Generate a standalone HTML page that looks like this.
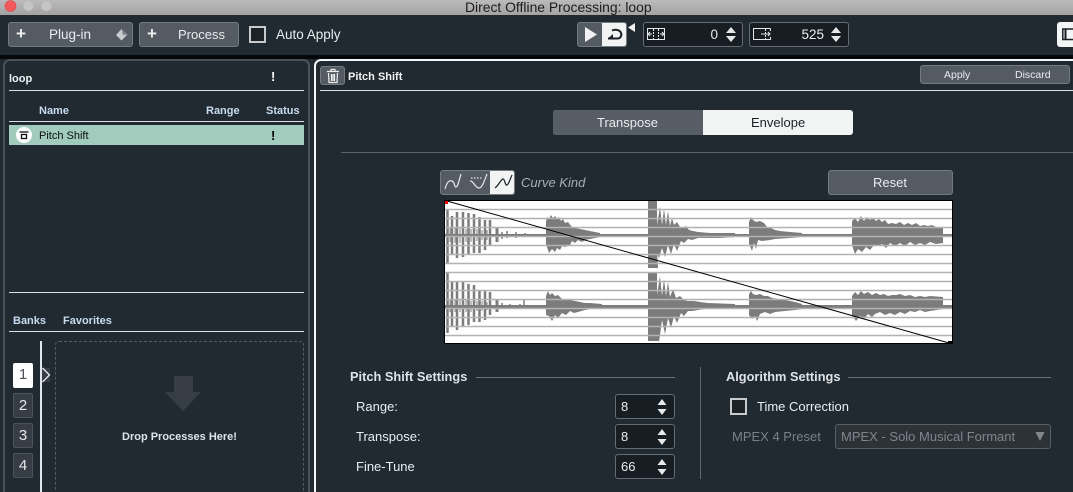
<!DOCTYPE html>
<html><head><meta charset="utf-8"><style>
html,body{margin:0;padding:0;background:#212a31}
#r{position:relative;width:1073px;height:492px;overflow:hidden;background:#212a31;font-family:"Liberation Sans",sans-serif;color:#e8edf0}
#r div,#r svg{position:absolute;box-sizing:border-box}
.t{white-space:nowrap;line-height:16px;height:16px}
.b{background:#545b62;border:1px solid #737a80;border-radius:3px}
.l{height:1px;background:#d8e0e6}
.h{font-weight:bold;font-size:11px;color:#c9dcef}
.f{background:#161d23;border:1px solid #666c72;border-radius:3px}
.c{background:#1b2228;border:2px solid #c8cbcd}
.sn{font-size:15px;color:#e8e8e8;text-align:center;border-radius:2px;line-height:24px}
</style></head><body><div id="r">
<div style="left:0;top:0;width:1073px;height:15px;background:linear-gradient(#bcbabc,#a3a3a3)"></div>
<svg style="left:0;top:0" width="60" height="15"><circle cx="10.500" cy="6" r="5.500" fill="#f25a5c" stroke="#d8474a" stroke-width=".6"/><circle cx="28.500" cy="6" r="5" fill="#c6c5c6"/><circle cx="46.500" cy="6" r="5" fill="#c6c5c6"/></svg>
<div class="t" style="left:465px;top:-1px;font-size:13.900px;color:#1c1c1c">Direct Offline Processing: loop</div>
<div style="left:0;top:55px;width:1073px;height:4px;background:#05080a"></div>

<div class="b" style="left:8px;top:22px;width:125px;height:25px"></div>
<div class="t" style="left:16px;top:26px;font-size:17px;font-weight:bold;color:#f0f0f0">+</div>
<div class="t" style="left:49px;top:27px;font-size:13.500px">Plug-in</div>
<svg style="left:115px;top:28px" width="14" height="14"><path d="M6.500 1L12.500 6.500 6.500 12.500 1 7Z" fill="#c9cccf"/><path d="M6.500 1L12.500 6.500 8 7Z" fill="#7b8186"/></svg>
<div class="b" style="left:139px;top:22px;width:100px;height:25px"></div>
<div class="t" style="left:147px;top:26px;font-size:17px;font-weight:bold;color:#f0f0f0">+</div>
<div class="t" style="left:178px;top:27px;font-size:13px">Process</div>
<div class="c" style="left:249px;top:26px;width:17px;height:17px"></div>
<div class="t" style="left:276px;top:27px;font-size:13.500px">Auto Apply</div>

<div class="b" style="left:577px;top:22px;width:50px;height:25px;overflow:hidden"><div style="left:24px;top:-1px;width:26px;height:25px;background:#f2f4f4"></div></div>
<svg style="left:577px;top:22px" width="60" height="26"><path d="M8 5L20 12.500 8 20Z" fill="#f2f2f2"/><path d="M31 16.500H41C44 16 45 13 44 11 43 8 39 7 35 8.500" fill="none" stroke="#1a1f24" stroke-width="2"/><path d="M31 16.500L36 12V16.500Z" fill="#1a1f24"/><path d="M58 1V10L51 5.500Z" fill="#f2f2f2"/></svg>
<div class="f" style="left:643px;top:22px;width:100px;height:25px"></div>
<svg style="left:647px;top:27px" width="20" height="15" fill="none" stroke="#e4e8ea"><rect x=".500" y="1.500" width="17" height="11"/><path d="M6.500 2V13M11.500 2V13" stroke-dasharray="2 1"/><path d="M1 7H5M3 5L1 7 3 9M17 7H13M15 5L17 7 15 9"/></svg>
<div class="t" style="left:700px;top:27px;width:18px;text-align:right;font-size:13.500px">0</div>
<svg style="left:725px;top:26px" width="12" height="17" fill="#e8e8e8"><path d="M6 1L11 7H1ZM6 16L11 10H1Z"/></svg>
<div class="f" style="left:749px;top:22px;width:100px;height:25px"></div>
<svg style="left:753px;top:27px" width="20" height="15" fill="none" stroke="#e4e8ea"><path d="M17.500 1.500H.5V12.500H17.500V10M17.500 4V1.500"/><path d="M12.500 2V13" stroke-dasharray="2 1"/><path d="M8 7H17M15 5L17 7 15 9"/></svg>
<div class="t" style="left:796px;top:27px;width:28px;text-align:right;font-size:13.500px">525</div>
<svg style="left:830px;top:26px" width="12" height="17" fill="#e8e8e8"><path d="M6 1L11 7H1ZM6 16L11 10H1Z"/></svg>
<div style="left:1057px;top:22px;width:20px;height:25px;background:#f4f5f5;border-radius:3px"></div>
<svg style="left:1062px;top:28px" width="11" height="13" fill="none" stroke="#1a1f24" stroke-width="1.500"><rect x=".800" y="1" width="12" height="10.500"/><path d="M3.500 1V11.500" stroke-width="2"/></svg>

<!-- left panel -->
<div style="left:3px;top:59px;width:307px;height:445px;border:2px solid #4b5157;border-radius:7px;background:#212a31"></div>
<div class="t" style="left:9px;top:71px;font-size:11px;font-weight:bold;color:#f0f3f5">loop</div>
<div class="t" style="left:271px;top:69px;font-size:13px;font-weight:bold;color:#fff">!</div>
<div class="l" style="left:9px;top:90px;width:295px"></div>
<div class="t h" style="left:39px;top:103px">Name</div>
<div class="t h" style="left:206px;top:103px">Range</div>
<div class="t h" style="left:266px;top:103px">Status</div>
<div class="l" style="left:9px;top:121px;width:295px"></div>
<div style="left:9px;top:125px;width:295px;height:20px;background:#a1cbbd"></div>
<svg style="left:16px;top:127px" width="16" height="16"><circle cx="8" cy="8" r="8" fill="#fff"/><path d="M3.500 5H12.500" stroke="#111" stroke-width="1.300"/><rect x="5.500" y="7.500" width="5" height="4" fill="none" stroke="#111" stroke-width="1.300"/></svg>
<div class="t" style="left:39px;top:128px;font-size:11px;color:#0b0f10">Pitch Shift</div>
<div class="t" style="left:271px;top:128px;font-size:13px;font-weight:bold;color:#000">!</div>
<div class="l" style="left:9px;top:292px;width:295px"></div>
<div class="t h" style="left:13px;top:313px">Banks</div>
<div class="t h" style="left:63px;top:313px">Favorites</div>
<div class="l" style="left:9px;top:331px;width:295px"></div>
<div style="left:40px;top:341px;width:2px;height:151px;background:#dfe7ec"></div>
<div class="sn" style="left:13px;top:363px;width:20px;height:25px;background:#fff;color:#4c5258">1</div>
<div class="sn b" style="left:13px;top:393px;width:20px;height:25px;background:#363d44;border-color:#4c5359">2</div>
<div class="sn b" style="left:13px;top:423px;width:20px;height:25px;background:#363d44;border-color:#4c5359">3</div>
<div class="sn b" style="left:13px;top:453px;width:20px;height:25px;background:#363d44;border-color:#4c5359">4</div>
<div style="left:42px;top:368px;width:8px;height:14px;background:#373e45"></div>
<svg style="left:41px;top:367px" width="10" height="16" fill="none" stroke="#e8edf0" stroke-width="1.300"><path d="M1.500 1L8.500 8 1.500 15"/></svg>
<div style="left:55px;top:341px;width:249px;height:170px;border:1px dashed #555c63;border-radius:4px"></div>
<svg style="left:164px;top:375px" width="38" height="36" fill="#363d45"><path d="M10 1H29V17H37L19 36 1 17H10Z"/></svg>
<div class="t" style="left:122px;top:429px;font-size:11px;font-weight:bold;color:#dde3e8">Drop Processes Here!</div>

<!-- right panel -->
<div style="left:314px;top:59px;width:780px;height:445px;border:2px solid #f4f6f7;border-radius:7px;background:#212a31"></div>
<div class="b" style="left:320px;top:66px;width:25px;height:19px"></div>
<svg style="left:326px;top:68px" width="14" height="16" fill="none" stroke="#eceeef" stroke-width="1.200"><path d="M1 3.500H13M5 3V1.500H9V3M2.500 5L3 14.500H11L11.500 5M5.500 6V13M7 6V13M8.500 6V13"/></svg>
<div class="t" style="left:348px;top:69px;font-size:11px;font-weight:bold;color:#f0f3f5">Pitch Shift</div>
<div class="b" style="left:920px;top:65px;width:150px;height:19px"></div>
<div class="t" style="left:944px;top:67px;font-size:10.500px">Apply</div>
<div class="t" style="left:1015px;top:67px;font-size:10.500px">Discard</div>
<div class="l" style="left:320px;top:90px;width:753px"></div>
<div style="left:553px;top:110px;width:300px;height:25px;border-radius:3px;background:#f2f4f4;overflow:hidden"><div style="left:0;top:0;width:150px;height:25px;background:#565d64"></div></div>
<div class="t" style="left:597px;top:115px;font-size:13px">Transpose</div>
<div class="t" style="left:751px;top:115px;font-size:13px;color:#1b2025">Envelope</div>
<div style="left:341px;top:152px;width:732px;height:1px;background:#5a6167"></div>

<div class="b" style="left:440px;top:170px;width:75px;height:25px;overflow:hidden"><div style="left:49px;top:-1px;width:25px;height:25px;background:#f2f4f4"></div></div>
<svg style="left:440px;top:170px" width="75" height="25" fill="none" stroke-width="1.200"><path d="M5 19C7 12 9 10 12 11 15 12 14 17 16 17 18 17 19 10 21 4" stroke="#e4e8ea"/><path d="M31 8H42" stroke="#e4e8ea" stroke-dasharray="1.500 1.500"/><path d="M30 11C33 10 35 18 39 18 42 18 44 12 47 4" stroke="#e4e8ea"/><path d="M55 18C59 15 61 9 63 9 65 9 65 16 67 15 69 14 70 9 72 5" stroke="#1a1f24"/></svg>
<div class="t" style="left:521px;top:175px;font-size:13px;font-style:italic;color:#a9afb5">Curve Kind</div>
<div class="b" style="left:828px;top:170px;width:125px;height:25px"></div>
<div class="t" style="left:873px;top:175px;font-size:13px">Reset</div>

<!-- waveform -->
<svg style="left:444px;top:200px" width="510" height="145" viewBox="444 200 510 145">
<rect x="444.500" y="200.500" width="508" height="143" fill="#fff"/>
<g fill="#7c7c7c">
<rect x="445" y="234" width="507" height="3"/><rect x="445" y="305" width="507" height="3"/>
<path d="M546 222L547 217 549 219 551 215 553 218 555 216 557 219 559 217 561 221 563 219 565 223 568 222 571 226 575 228 580 229 585 230 590 231 595 232 600 233V237L595 238 590 239 585 240 582 242 578 240 575 243 572 241 570 245 565 247 562 246 560 250 557 248 555 252 552 249 549 253 547 247 546 245Z"/>
<path d="M648 201H657V250L658 268H648ZM657 225L660 207 662 225 664 209 666 225 668 211 670 226 672 218 674 225 677 222 680 227 683 228 686 226 689 230 693 231 698 232 710 233 735 233V237L720 238 705 238 698 238 692 240 688 239 684 243 681 241 677 251 674 244 671 254 668 245 665 257 662 248 659 258 657 254Z"/>
<path d="M749 222L751 217 753 220 756 222 760 221 764 223 767 227 771 228 775 230 780 231 790 232 802 233V237L790 238 775 239 770 240 762 241 758 240 756 249 754 243 752 251 750 246 749 244Z"/>
<path d="M852 221L855 218 858 222 861 216 864 221 867 217 870 220 873 218 876 221 879 219 882 222 885 220 888 224 892 223 896 224 900 222 904 225 908 223 912 225 916 223 920 226 924 225 928 226 932 225 936 227 943 227V243L936 244 930 242 925 245 920 243 915 245 910 242 905 246 900 243 895 246 890 243 886 248 882 244 878 246 874 245 870 250 866 247 862 252 858 249 855 254 852 245Z"/>
<path d="M546 296L548 291 550 295 552 293 555 296 558 295 561 298 565 300 570 300 575 301 580 302 585 303 590 303 602 304V309L590 309 585 310 578 312 574 313 570 311 566 315 562 313 558 318 555 315 552 321 549 316 546 315Z"/>
<path d="M648 272H657V325L658 341H648ZM657 295L660 276 662 296 664 279 666 296 668 282 670 297 673 289 676 298 680 296 684 300 688 301 694 301 700 302 708 303 735 304V309L720 309 705 309 698 310 692 311 688 311 684 316 681 313 677 323 674 316 671 328 668 318 665 334 662 320 659 342 657 338Z"/>
<path d="M749 294L751 291 753 294 756 295 760 294 764 296 768 296 772 298 778 299 785 300 795 302 802 304V309L795 310 785 311 775 312 770 314 765 312 760 314 757 321 755 316 752 319 749 315Z"/>
<path d="M852 296L855 292 858 295 861 291 864 294 868 292 872 295 876 293 880 295 884 294 888 296 892 295 896 295 900 294 905 296 910 295 915 297 920 296 925 297 930 296 943 297V309L930 311 925 312 920 310 915 312 910 311 905 314 900 312 895 315 890 313 885 315 880 312 875 314 872 317 868 314 864 319 860 316 856 321 852 315Z"/>
</g>
<g stroke="#7c7c7c" fill="none">
<path stroke-width="2.500" d="M447.500 210V263M452 216V255M457 212V258M463 212V257M468.500 213V255M474 214V253M479.500 217V253M485 220V250M490 220V245"/>
<path stroke-width="1" d="M450 228V242M455 228V243M460 228V243M466 229V242M471 229V242M477 229V241M482 230V240M487 230V240"/>
<path stroke-width="3" d="M497 228V242"/>
<path stroke-width="1.500" d="M502 232V239M507 231V238M516 232V238M525 233V237"/>
<path stroke-width="2.500" d="M447.500 273V333M452 282V327M457 282V330M463 281V327M468.500 284V325M474 285V322M479.500 290V322M485 291V320M490 292V315"/>
<path stroke-width="1" d="M450 300V312M455 300V312M460 300V312M466 300V312M471 301V312M477 301V311M482 301V311M487 302V310"/>
<path stroke-width="3" d="M497 300V312"/>
<path stroke-width="1.500" d="M502 303V309M510 304V308M520 304V308M524 300V309"/>
</g>
<path stroke="#b2b2b2" stroke-width="1.400" fill="none" d="M445 209.500H952M445 218.500H952M445 227.500H952M445 236.500H952M445 245.500H952M445 254.500H952M445 263.500H952M445 272.500H952M445 281.500H952M445 290.500H952M445 299.500H952M445 308.500H952M445 317.500H952M445 326.500H952M445 335.500H952"/>
<path d="M447 201L949 343" stroke="#000" stroke-width="1" fill="none"/>
<rect x="445" y="201" width="3" height="3" fill="#e00000"/>
<rect x="948" y="341" width="4" height="2" fill="#000"/>
<rect x="444.500" y="200.500" width="508" height="143" fill="none" stroke="#000" stroke-width="1"/>
</svg>

<!-- bottom -->
<div class="t" style="left:350px;top:369px;font-size:12.800px;font-weight:bold;color:#dde2e6">Pitch Shift Settings</div>
<div style="left:476px;top:377px;width:199px;height:1px;background:#6a7177"></div>
<div class="t" style="left:356px;top:399px;font-size:13px">Range:</div>
<div class="t" style="left:356px;top:429px;font-size:13px">Transpose:</div>
<div class="t" style="left:356px;top:459px;font-size:13px">Fine-Tune</div>
<div class="f" style="left:615px;top:394px;width:60px;height:25px"></div>
<div class="f" style="left:615px;top:424px;width:60px;height:25px"></div>
<div class="f" style="left:615px;top:454px;width:60px;height:25px"></div>
<div class="t" style="left:621px;top:399px;font-size:13px">8</div>
<div class="t" style="left:621px;top:429px;font-size:13px">8</div>
<div class="t" style="left:621px;top:459px;font-size:13px">66</div>
<svg style="left:656px;top:398px" width="12" height="80" fill="#e8e8e8"><path d="M6 1L10.500 7H1.500ZM6 17L10.500 11H1.500ZM6 31L10.500 37H1.500ZM6 47L10.500 41H1.500ZM6 61L10.500 67H1.500ZM6 77L10.500 71H1.500Z"/></svg>
<div style="left:700px;top:367px;width:1px;height:112px;background:#5f666c"></div>
<div class="t" style="left:726px;top:369px;font-size:12.800px;font-weight:bold;color:#dde2e6">Algorithm Settings</div>
<div style="left:848px;top:377px;width:203px;height:1px;background:#6a7177"></div>
<div class="c" style="left:730px;top:398px;width:17px;height:17px"></div>
<div class="t" style="left:757px;top:399px;font-size:13px">Time Correction</div>
<div class="t" style="left:732px;top:429px;font-size:13px;color:#7a8086">MPEX 4 Preset</div>
<div style="left:835px;top:424px;width:216px;height:25px;border:1px solid #595f65;border-radius:3px;background:#2b3339"></div>
<div class="t" style="left:841px;top:429px;font-size:13px;color:#7f858b">MPEX - Solo Musical Formant</div>
<svg style="left:1034px;top:431px" width="12" height="11" fill="#7f858b"><path d="M1.500 1H10.500L6 10Z"/></svg>
</div></body></html>
